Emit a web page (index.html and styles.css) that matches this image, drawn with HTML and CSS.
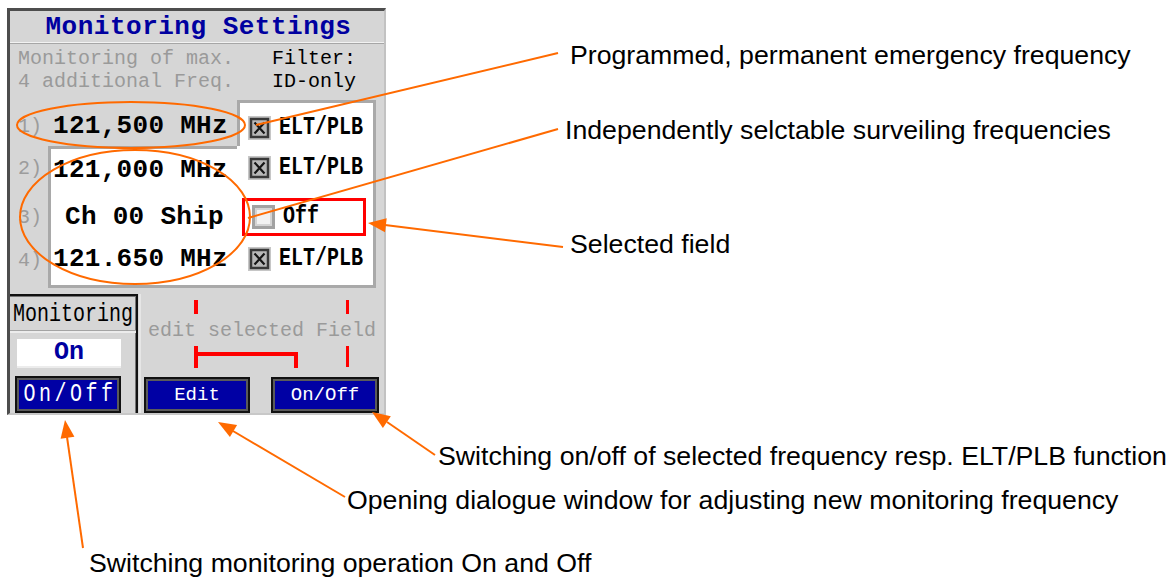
FILE: index.html
```html
<!DOCTYPE html>
<html lang="en">
<head>
<meta charset="utf-8">
<title>Monitoring Settings</title>
<link rel="stylesheet" href="styles.css">
</head>
<body>
<div class="page">
  <div class="device">
    <div class="title">Monitoring Settings</div>
    <div class="sep"></div>
    <div class="info">
      <div class="info-left">Monitoring of max.<br>4 additional Freq.</div>
      <div class="info-right">Filter:<br>ID-only</div>
    </div>
    <div class="freqs">
      <div class="num r1">1)</div>
      <div class="freq r1">121,500 MHz</div>
      <div class="chk r1">
        <svg class="cb" width="23" height="24" viewBox="0 0 23 24"><rect width="23" height="24" fill="#c6c6c6"/><rect x="3" y="3" width="17" height="18" fill="#b8b8b8" stroke="#383838" stroke-width="2.5"/><path d="M6.5 6.5 L16.5 17.5 M16.5 6.5 L6.5 17.5" stroke="#151515" stroke-width="2.2"/></svg>
        <span class="flag">ELT/PLB</span>
      </div>

      <div class="num r2">2)</div>
      <div class="freq r2">121,000 MHz</div>
      <div class="chk r2">
        <svg class="cb" width="23" height="24" viewBox="0 0 23 24"><rect width="23" height="24" fill="#c6c6c6"/><rect x="3" y="3" width="17" height="18" fill="#b8b8b8" stroke="#383838" stroke-width="2.5"/><path d="M6.5 6.5 L16.5 17.5 M16.5 6.5 L6.5 17.5" stroke="#151515" stroke-width="2.2"/></svg>
        <span class="flag">ELT/PLB</span>
      </div>

      <div class="num r3">3)</div>
      <div class="freq r3 ship">Ch 00 Ship</div>
      <div class="chk r3">
        <div class="selected">
          <svg class="cb" width="23" height="24" viewBox="0 0 23 24"><rect width="23" height="24" fill="#a2a2a2"/><rect x="3" y="3" width="17" height="18" fill="#d4d4d4"/><rect x="5" y="5" width="13" height="14" fill="#f2f2f2"/></svg>
          <span class="flag">Off</span>
        </div>
      </div>

      <div class="num r4">4)</div>
      <div class="freq r4">121.650 MHz</div>
      <div class="chk r4">
        <svg class="cb" width="23" height="24" viewBox="0 0 23 24"><rect width="23" height="24" fill="#c6c6c6"/><rect x="3" y="3" width="17" height="18" fill="#b8b8b8" stroke="#383838" stroke-width="2.5"/><path d="M6.5 6.5 L16.5 17.5 M16.5 6.5 L6.5 17.5" stroke="#151515" stroke-width="2.2"/></svg>
        <span class="flag">ELT/PLB</span>
      </div>
    </div>

    <div class="bottom">
      <div class="mon">
        <div class="mon-label"><span class="tall">Monitoring</span></div>
        <div class="mon-state">On</div>
        <div class="btn btn-big"><span class="tall">On/Off</span></div>
      </div>
      <div class="edit">
        <div class="edit-label">edit selected Field</div>
        <div class="edit-btns">
          <div class="btn btn-edit">Edit</div>
          <div class="btn btn-onoff">On/Off</div>
        </div>
      </div>
    </div>
  </div>

  <svg class="overlay" width="1175" height="578" viewBox="0 0 1175 578">
    <g fill="#ff0000">
      <rect x="194" y="300" width="4" height="14"/>
      <rect x="194" y="346" width="4" height="22"/>
      <rect x="194" y="352" width="103" height="4"/>
      <rect x="294" y="352" width="4" height="16"/>
      <rect x="346" y="300" width="3" height="14"/>
      <rect x="346" y="346" width="3" height="21"/>
    </g>
    <g fill="none" stroke="#ff6a00" stroke-width="2">
      <ellipse cx="131" cy="125" rx="114" ry="23"/>
      <ellipse cx="135" cy="217" rx="115" ry="67"/>
      <line x1="558" y1="53" x2="256" y2="125"/>
      <line x1="558" y1="129" x2="248" y2="218"/>
      <line x1="563" y1="247" x2="385" y2="225"/>
      <line x1="435" y1="455" x2="387" y2="422"/>
      <line x1="345" y1="497" x2="233" y2="431"/>
      <line x1="83" y1="548" x2="67" y2="437"/>
    </g>
    <g fill="#ff6a00">
      <polygon points="368,223 386.7,218.3 385,232.2"/>
      <polygon points="372,412 390.8,416.3 382.9,427.9"/>
      <polygon points="218,422 237.1,425.1 229.9,437.1"/>
      <polygon points="65,420 74.4,436.8 60.6,438.8"/>
    </g>
  </svg>

  <p class="note n1">Programmed, permanent emergency frequency</p>
  <p class="note n2">Independently selctable surveiling frequencies</p>
  <p class="note n3">Selected field</p>
  <p class="note n4">Switching on/off of selected frequency resp. ELT/PLB function</p>
  <p class="note n5">Opening dialogue window for adjusting new monitoring frequency</p>
  <p class="note n6">Switching monitoring operation On and Off</p>
</div>
</body>
</html>
```

FILE: styles.css
```css
* { box-sizing: border-box; }

body {
  margin: 0;
  background: #ffffff;
}

.page {
  position: relative;
  width: 1175px;
  height: 578px;
  overflow: hidden;
  font-family: "Liberation Mono", "DejaVu Sans Mono", monospace;
}

/* ---------- device screen ---------- */
.device {
  margin: 8px 0 0 7px;
  width: 379px;
  height: 407px;
  background: #d6d6d6;
  border-top: 3px solid #4d4d4d;
  border-left: 3px solid #4d4d4d;
  border-right: 2px solid #c2c2c2;
  border-bottom: 2px solid #c8c8c8;
  display: flex;
  flex-direction: column;
}

.title {
  height: 31px;
  line-height: 33px;
  text-align: center;
  color: #0000a0;
  font-weight: bold;
  font-size: 26px;
  letter-spacing: 0.5px;
  padding-left: 3px;
}

.sep {
  border-top: 1px solid #f2f2f2;
  border-bottom: 1px solid #a6a6a6;
}

.info {
  height: 53px;
  display: grid;
  grid-template-columns: 254px 1fr;
  padding: 3px 0 0 8px;
  font-size: 20px;
  line-height: 23px;
}

.info-left { color: #9a9a9a; }
.info-right { color: #000000; }

/* ---------- frequency table ---------- */
.freqs {
  display: grid;
  grid-template-columns: 38px 189px 139px;
  grid-template-rows: 46px 44px 50px 48px;
  margin-top: 3px;
}

.num {
  color: #9c9c9c;
  font-size: 20px;
  padding-left: 8px;
  display: flex;
  align-items: center;
}

.freq {
  font-weight: bold;
  font-size: 26px;
  letter-spacing: 0.3px;
  display: flex;
  align-items: center;
  padding-left: 2px;
  background: #ffffff;
  border-left: 3px solid #a9a9a9;
  color: #000;
}

.freq.r1 {
  background: transparent;
  border-left-color: transparent;
}

.freq.r2 { border-top: 3px solid #a9a9a9; }
.freq.r4 { border-bottom: 3px solid #a9a9a9; }
.freq.ship { padding-left: 14px; }

.chk {
  background: #ffffff;
  display: flex;
  align-items: center;
  padding-left: 11px;
  border-right: 3px solid #a9a9a9;
}

.chk.r1 {
  border-top: 3px solid #a9a9a9;
  border-left: 3px solid #a9a9a9;
  padding-left: 8px;
}

.chk.r4 { border-bottom: 3px solid #a9a9a9; }
.chk.r3 { padding-left: 5px; }

.r1 { padding-top: 6px; }
.r3 { padding-top: 4px; }
.r4 { padding-bottom: 8px; }

.cb { display: block; flex: none; }

.flag {
  display: inline-block;
  font-weight: bold;
  font-size: 20px;
  line-height: 20px;
  margin-left: 8px;
  transform: scaleY(1.25);
}

.selected {
  width: 124px;
  height: 38px;
  border: 3px solid #ff0000;
  display: flex;
  align-items: center;
  padding-left: 7px;
}

.selected .flag { margin-left: 8px; }

/* ---------- bottom controls ---------- */
.bottom {
  flex: 1;
  display: flex;
  margin-top: 6px;
}

.mon {
  width: 128px;
  display: flex;
  flex-direction: column;
  border-top: 2px solid #111;
  border-right: 2px solid #111;
  box-shadow: inset -1px 1px 0 #747474;
}

.mon-label {
  height: 37px;
  padding-top: 6px;
  font-size: 20px;
  line-height: 26px;
  text-align: center;
  border-bottom: 2px solid #ececec;
  box-shadow: 0 -1px 0 #a4a4a4 inset;
}

.tall {
  display: inline-block;
  transform: scaleY(1.25);
}

.mon-state {
  margin: 6px 0 0 7px;
  width: 104px;
  height: 27px;
  background: #ffffff;
  color: #0000a0;
  font-weight: bold;
  font-size: 25px;
  line-height: 28px;
  text-align: center;
  box-shadow: 0 2px 0 #ececec;
}

.btn {
  background: #0000a4;
  color: #ffffff;
  border: 2px solid #111111;
  box-shadow: inset 0 0 0 2px #5a5a5a;
  display: flex;
  align-items: center;
  justify-content: center;
  font-size: 19px;
}

.btn-big {
  flex: 1;
  margin: 10px 0 0 5px;
  width: 106px;
  font-size: 20px;
  letter-spacing: 3.5px;
  padding-left: 4px;
}

.edit {
  flex: 1;
  display: flex;
  flex-direction: column;
  margin-left: 1px;
  border-left: 2px solid #e6e6e6;
}

.edit-label {
  margin-top: 26px;
  padding-left: 7px;
  color: #9a9a9a;
  font-size: 20px;
  line-height: 22px;
}

.edit-btns {
  flex: 1;
  display: flex;
  margin-top: 35px;
  padding-left: 3px;
}

.btn-edit { width: 106px; }

.btn-onoff {
  width: 108px;
  margin-left: 21px;
}

/* ---------- annotations ---------- */
.overlay {
  position: absolute;
  left: 0;
  top: 0;
  pointer-events: none;
}

.note {
  position: absolute;
  margin: 0;
  font-family: "Liberation Sans", Arial, sans-serif;
  font-size: 26.7px;
  line-height: 28px;
  color: #000;
  white-space: nowrap;
}

.n1 { left: 570px; top: 41px; }
.n2 { left: 565px; top: 116px; }
.n3 { left: 570px; top: 230px; }
.n4 { left: 438px; top: 442px; }
.n5 { left: 347px; top: 486px; }
.n6 { left: 89px; top: 549px; }
```
